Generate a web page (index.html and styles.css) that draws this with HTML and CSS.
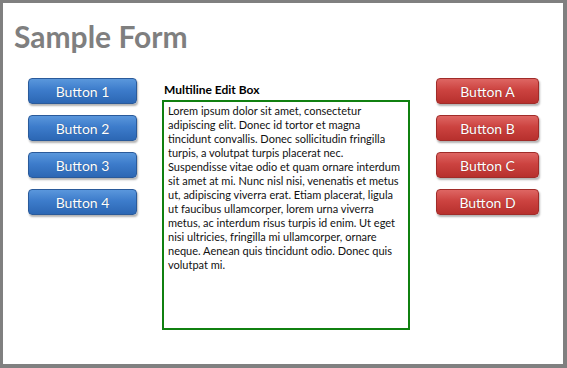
FILE: index.html
```html
<!DOCTYPE html>
<html>
<head>
<meta charset="utf-8">
<link rel="stylesheet" href="styles.css">
</head>
<body>
<div class="frame">
  <h1 class="title">Sample Form</h1>
  <div class="content">
    <div class="col col-left">
      <div class="btn btn-blue">Button 1</div>
      <div class="btn btn-blue">Button 2</div>
      <div class="btn btn-blue">Button 3</div>
      <div class="btn btn-blue">Button 4</div>
    </div>
    <div class="col col-mid">
      <div class="label">Multiline Edit Box</div>
      <div class="editbox">Lorem ipsum dolor sit amet, consectetur<br>adipiscing elit. Donec id tortor et magna<br>tincidunt convallis. Donec sollicitudin fringilla<br>turpis, a volutpat turpis placerat nec.<br>Suspendisse vitae odio et quam ornare interdum<br>sit amet at mi. Nunc nisl nisi, venenatis et metus<br>ut, adipiscing viverra erat. Etiam placerat, ligula<br>ut faucibus ullamcorper, lorem urna viverra<br>metus, ac interdum risus turpis id enim. Ut eget<br>nisi ultricies, fringilla mi ullamcorper, ornare<br>neque. Aenean quis tincidunt odio. Donec quis<br>volutpat mi.</div>
    </div>
    <div class="col col-right">
      <div class="btn btn-red">Button A</div>
      <div class="btn btn-red">Button B</div>
      <div class="btn btn-red">Button C</div>
      <div class="btn btn-red">Button D</div>
    </div>
  </div>
</div>
</body>
</html>
```
FILE: styles.css
```css
html, body {
  margin: 0;
  padding: 0;
  background: #ffffff;
}
.frame {
  box-sizing: border-box;
  width: 567px;
  height: 368px;
  border-style: solid;
  border-color: #808080;
  border-width: 3px 4px 4px 3px;
  font-family: Lato, "Liberation Sans", sans-serif;
}
.title {
  margin: 0;
  padding: 15px 0 0 11px;
  height: 40px;
  font-size: 30px;
  line-height: 36px;
  font-weight: bold;
  color: #7f7f7f;
}
.content {
  display: flex;
  padding: 20px 0 0 25px;
}
.col {
  display: flex;
  flex-direction: column;
}
.col-left {
  width: 109px;
  gap: 11px;
}
.col-mid {
  width: 248px;
  margin-left: 25px;
}
.col-right {
  width: 103px;
  margin-left: 26px;
  gap: 11px;
}
.btn {
  box-sizing: border-box;
  height: 26px;
  border-radius: 4px;
  color: #ffffff;
  font-size: 14px;
  line-height: 25px;
  text-align: center;
  text-shadow: 0 0 1px rgba(0,0,0,0.35);
  box-shadow: 1px 2px 2px rgba(0,0,0,0.3);
}
.btn-blue {
  background: linear-gradient(#5a97dc 0%, #3d7ccb 45%, #2c67b4 100%);
  border: 1px solid #2a5a9a;
}
.btn-red {
  background: linear-gradient(#de6663 0%, #cc4340 45%, #b7302d 100%);
  border: 1px solid #a02c29;
}
.label {
  font-size: 12px;
  font-weight: bold;
  color: #000;
  line-height: 16px;
  height: 22px;
  padding: 4px 0 0 2px;
  box-sizing: border-box;
}
.editbox {
  box-sizing: border-box;
  height: 230px;
  border: 2px solid #108010;
  padding: 2px 4px;
  font-size: 11px;
  line-height: 14px;
  color: #111;
  white-space: nowrap;
}
```
